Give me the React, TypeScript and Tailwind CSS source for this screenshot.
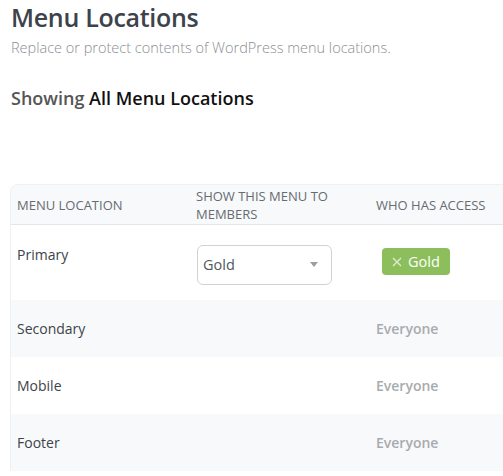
import React from "react";

const rows = [
  { name: "Primary", select: "Gold", access: "Gold" },
  { name: "Secondary" },
  { name: "Mobile" },
  { name: "Footer" },
];

export default function App() {
  return (
    <div className="min-h-[476px] bg-white font-['Open_Sans',sans-serif] pl-[10px]">
      <h1 className="pl-px pt-px text-[25px] leading-[32px] font-semibold text-[#3c434a] -tracking-[0.3px]">Menu Locations</h1>
      <p className="pl-px mt-[5px] text-[14.5px] leading-[20px] font-light text-[#8a8f94]">
        Replace or protect contents of WordPress menu locations.
      </p>
      <h2 className="pl-px mt-[28px] text-[18px] leading-[24px] font-semibold text-[#555]">
        Showing <span className="text-[#111]">All Menu Locations</span>
      </h2>

      <div className="mt-[74px] rounded-tl-[8px] border-l border-t border-[#eef0f2] overflow-hidden">
        <div className="flex h-[40px] bg-[#f8f9fb] border-b border-[#e4e6e9] text-[13px] leading-[18px] uppercase text-[#666c72]">
          <div className="w-[185px] pl-[6px] flex items-center">Menu Location</div>
          <div className="w-[180px] flex items-center">Show this menu to<br />members</div>
          <div className="flex-1 flex items-center">Who has access</div>
        </div>
        {rows.map((r, i) => (
          <div
            key={r.name}
            className={`flex text-[14px] leading-[20px] text-[#3c434a] ${i % 2 === 1 ? "bg-[#f8f9fb]" : "bg-white"} ${i === 0 ? "h-[75px]" : "h-[57px]"}`}
          >
            <div className={`w-[185px] pl-[6px] ${i === 0 ? "pt-[20px]" : "flex items-center"}`}>{r.name}</div>
            <div className="w-[180px] flex items-center">
              {r.select && (
                <div className="ml-px mt-[4px] w-[135px] h-[40px] rounded-[6px] border border-[#cfd2d6] flex items-center justify-between pl-[5px] pr-[13px] text-[14.5px] text-[#50575e]">
                  <span>{r.select}</span>
                  <svg width="8" height="5" viewBox="0 0 8 5"><path d="M0 0h8L4 5z" fill="#9a9ea3" /></svg>
                </div>
              )}
            </div>
            <div className="flex-1 flex items-center">
              {r.access ? (
                <span className="ml-[6px] -mt-[2px] inline-flex items-center gap-[6px] h-[27px] px-[10px] rounded-[4px] bg-[#8cbf5c] text-white text-[14.5px]">
                  <svg width="10" height="10" viewBox="0 0 10 10"><path d="M1 1l8 8M9 1l-8 8" stroke="#dfeccf" strokeWidth="1.3" /></svg>
                  {r.access}
                </span>
              ) : (
                <span className="font-semibold text-[14px] text-[#a8abae]">Everyone</span>
              )}
            </div>
          </div>
        ))}
      </div>
    </div>
  );
}
